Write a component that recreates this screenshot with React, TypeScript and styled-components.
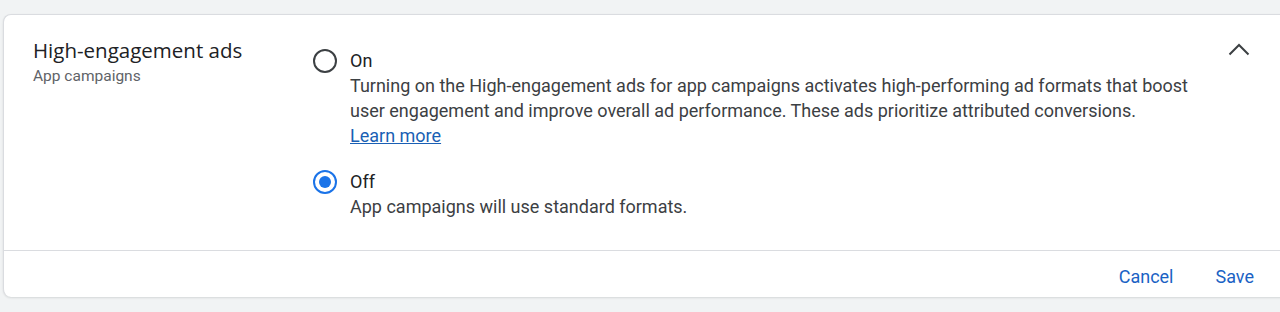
import styled, { createGlobalStyle } from "styled-components";

const GlobalStyle = createGlobalStyle`
  body {
    margin: 0;
    background: #f1f3f4;
    overflow: hidden;
    font-family: Roboto, "Liberation Sans", sans-serif;
  }
`;

const Page = styled.div`
  padding: 14px 0 15px 3px;
`;

const Card = styled.section`
  background: #fff;
  border-top: 1px solid #dadce0;
  border-left: 1px solid #dadce0;
  border-radius: 8px 0 0 8px;
  box-shadow: 0 1px 2px rgba(60, 64, 67, 0.15);
  margin-right: -12px;
`;

const Body = styled.div`
  display: flex;
  align-items: flex-start;
  padding: 22px 41px 31px 29px;
  border-bottom: 1px solid #dadce0;
`;

const Heading = styled.div`
  width: 280px;
  flex-shrink: 0;
`;

const Title = styled.h2`
  margin: 0;
  font-family: "Open Sans", Roboto, sans-serif;
  font-weight: 400;
  font-size: 20.5px;
  line-height: 26px;
  color: #202124;
`;

const Subtitle = styled.div`
  margin-top: 2px;
  font-size: 15.5px;
  line-height: 22px;
  color: #5f6368;
`;

const Options = styled.div`
  flex: 1;
  display: flex;
  flex-direction: column;
  gap: 22px;
  padding-top: 12px;
`;

const Option = styled.label`
  display: flex;
  align-items: flex-start;
  gap: 13px;
  cursor: pointer;
`;

const Radio = styled.span<{ $checked?: boolean }>`
  box-sizing: border-box;
  width: 24px;
  height: 24px;
  flex-shrink: 0;
  border-radius: 50%;
  border: 2px solid ${(p) => (p.$checked ? "#1a73e8" : "#3c4043")};
  display: flex;
  align-items: center;
  justify-content: center;
  &::after {
    content: "";
    width: 12px;
    height: 12px;
    border-radius: 50%;
    background: #1a73e8;
    display: ${(p) => (p.$checked ? "block" : "none")};
  }
`;

const OptionText = styled.div`
  max-width: 860px;
`;

const Label = styled.div`
  font-size: 18px;
  line-height: 24px;
  color: #202124;
`;

const Description = styled.div`
  font-size: 18px;
  line-height: 25px;
  color: #3c4043;
`;

const LearnMore = styled.a`
  color: #1a5fb4;
  text-decoration: underline;
`;

const Toggle = styled.button`
  background: none;
  border: none;
  padding: 0;
  margin-top: 1px;
  color: #3c4043;
  display: flex;
  cursor: pointer;
`;

const Footer = styled.div`
  display: flex;
  justify-content: flex-end;
  gap: 10px;
  padding: 8px 22px 2px 0;
`;

const TextButton = styled.button`
  background: none;
  border: none;
  font-family: Roboto, sans-serif;
  font-size: 18px;
  line-height: 24px;
  color: #1a62c4;
  padding: 6px 16px;
  cursor: pointer;
`;

export default function App() {
  return (
    <>
      <GlobalStyle />
      <Page>
        <Card>
          <Body>
            <Heading>
              <Title>High-engagement ads</Title>
              <Subtitle>App campaigns</Subtitle>
            </Heading>
            <Options>
              <Option>
                <Radio />
                <OptionText>
                  <Label>On</Label>
                  <Description>
                    Turning on the High-engagement ads for app campaigns activates
                    high-performing ad formats that boost user engagement and improve
                    overall ad performance. These ads prioritize attributed conversions.
                    <br />
                    <LearnMore href="#">Learn more</LearnMore>
                  </Description>
                </OptionText>
              </Option>
              <Option>
                <Radio $checked />
                <OptionText>
                  <Label>Off</Label>
                  <Description>App campaigns will use standard formats.</Description>
                </OptionText>
              </Option>
            </Options>
            <Toggle aria-label="Collapse">
              <svg width="24" height="24" viewBox="0 0 24 24" fill="none">
                <path d="M2.5 16.5L12 7l9.5 9.5" stroke="currentColor" strokeWidth="2" />
              </svg>
            </Toggle>
          </Body>
          <Footer>
            <TextButton>Cancel</TextButton>
            <TextButton>Save</TextButton>
          </Footer>
        </Card>
      </Page>
    </>
  );
}
